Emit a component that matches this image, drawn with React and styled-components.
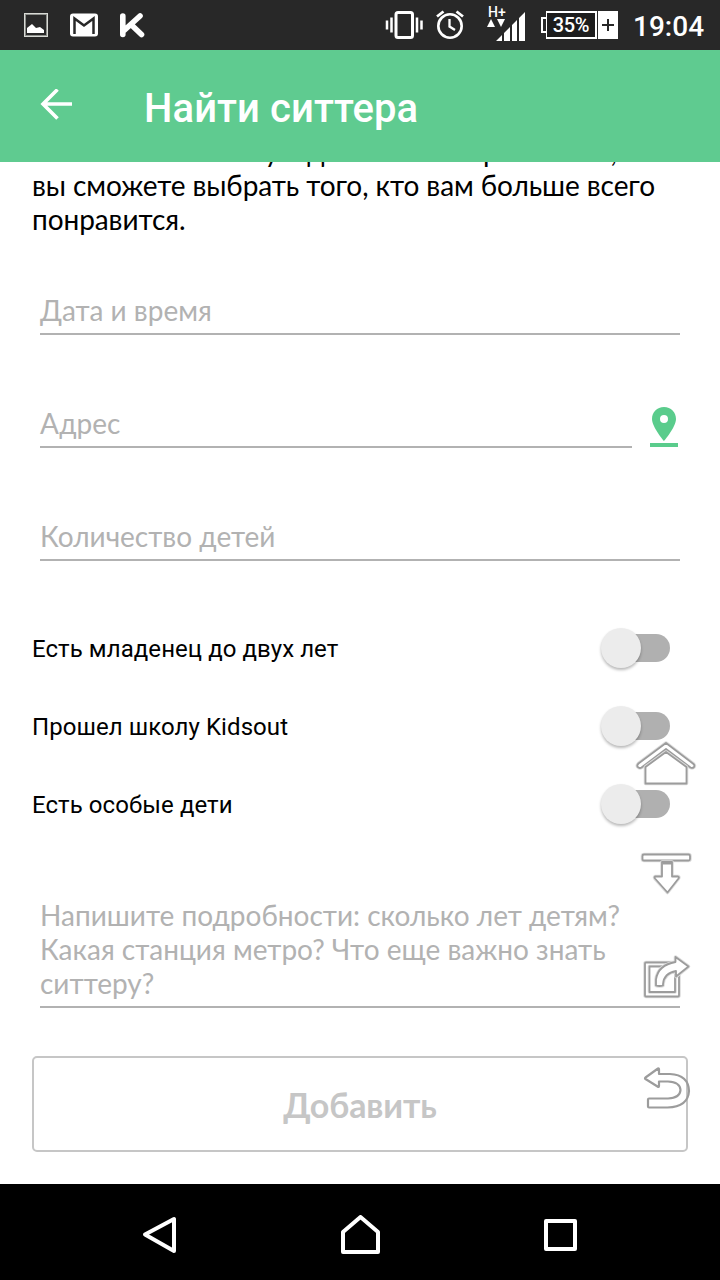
import React from 'react';
import styled, { createGlobalStyle } from 'styled-components';

const GlobalStyle = createGlobalStyle`
    body {
        margin: 0;
        background: #fff;
    }
    * {
        box-sizing: border-box;
    }
    svg {
        display: block;
    }
`;

const Screen = styled.div`
    position: relative;
    display: flex;
    flex-direction: column;
    width: 720px;
    height: 1280px;
    overflow: hidden;
    background: #fff;
    font-family: Lato, 'Open Sans', sans-serif;
`;

const StatusBar = styled.header`
    display: flex;
    flex: none;
    align-items: flex-start;
    justify-content: space-between;
    height: 50px;
    background: #282828;
    color: #fff;
    font-family: Roboto, sans-serif;
`;

const StatusGroup = styled.div`
    display: flex;
    height: 50px;
`;

const SignalBox = styled.div`
    display: flex;
    flex-direction: column;
    width: 40px;
    margin-left: 20px;
    padding-top: 6px;
`;

const Network = styled.span`
    height: 11px;
    padding-left: 1px;
    font: 500 14px/13px Roboto, sans-serif;
`;

const Battery = styled.div`
    display: flex;
    align-items: center;
    height: 28px;
    margin: 11px 0 0 14px;
`;

const BatteryTip = styled.span`
    width: 5px;
    height: 16px;
    border: 2px solid #fff;
    border-right: 0;
`;

const BatteryLevel = styled.span`
    width: 51px;
    height: 28px;
    border: 2px solid #fff;
    border-left-width: 1px;
    background: #1c1c1c;
    font: 500 20px/25px Roboto, sans-serif;
    letter-spacing: -0.3px;
    text-align: center;
`;

const BatteryCharge = styled.span`
    display: flex;
    align-items: center;
    justify-content: center;
    width: 20px;
    height: 28px;
    margin-left: 1px;
    background: #fff;
`;

const Clock = styled.time`
    width: 71px;
    margin: 0 16px 0 15px;
    font: 500 28px/53px Roboto, sans-serif;
    white-space: nowrap;
`;

const AppBar = styled.div`
    display: flex;
    flex: none;
    align-items: center;
    height: 112px;
    padding-left: 40px;
    background: #5fcb90;
`;

const Title = styled.h1`
    margin: 6px 0 0 71px;
    color: #fff;
    font: 500 40px/48px Roboto, sans-serif;
    letter-spacing: 0.1px;
`;

const Content = styled.main`
    flex: 1;
    overflow: hidden;
    padding: 0 32px;
`;

const Intro = styled.p`
    margin: -28px 0 0;
    color: #000;
    font-size: 28px;
    line-height: 34px;
    letter-spacing: -0.08px;
    white-space: nowrap;
`;

const FieldRow = styled.div`
    display: flex;
    align-items: flex-end;
    height: ${props => props.$height || 113}px;
    padding: 0 8px;
`;

const Field = styled.div`
    flex: 1;
    padding-bottom: 6px;
    border-bottom: 2px solid #b2b2b2;
    color: #b2b2b2;
    font-size: 28px;
    line-height: 34px;
`;

const PinButton = styled.div`
    margin: 0 2px 0 18px;
`;

const SwitchRow = styled.div`
    display: flex;
    align-items: center;
    justify-content: space-between;
    height: 78px;
    padding-right: 18px;
`;

const SwitchLabel = styled.span`
    padding-top: 2px;
    color: #000;
    font: 400 24px/30px Roboto, sans-serif;
    letter-spacing: 0.07px;
`;

const SwitchList = styled.div`
    padding-top: 48px;
`;

const Track = styled.div`
    display: flex;
    align-items: center;
    width: 56px;
    height: 28px;
    border-radius: 14px;
    background: #b0b0b0;
`;

const Thumb = styled.div`
    flex: none;
    width: 40px;
    height: 40px;
    margin-left: -13px;
    border-radius: 50%;
    background: #ececec;
    box-shadow: 0 2px 3px rgba(0, 0, 0, 0.28);
`;

const AddButton = styled.button`
    display: block;
    width: 656px;
    height: 96px;
    margin-top: 48px;
    padding: 2px 0 0;
    border: 2px solid #c6c6c6;
    border-radius: 5px;
    background: transparent;
    color: #c6c6c6;
    font: 700 34px/42px Lato, sans-serif;
    letter-spacing: -0.1px;
`;

const FloatingTools = styled.div`
    position: absolute;
    top: 739px;
    left: 634px;
`;

const NavBar = styled.nav`
    display: flex;
    flex: none;
    align-items: center;
    justify-content: space-between;
    height: 96px;
    padding: 6px 140px 0;
    background: #000;
`;

const switches = ['Есть младенец до двух лет', 'Прошел школу Kidsout', 'Есть особые дети'];

const toolShapes = [
    // home
    'M32 4L4.500 24.500q-2.500 2.500 0 4 1.500 1 3 0L32 10l24.500 18.500q2 1 3.500-.5 1-1.500-.5-3z',
    'M11.500 28V44.500h41V28L32 13z',
    // scroll to bottom
    'M10 115.500h44.500q1.500 0 1.500 1.500v3q0 1.500-1.500 1.500H10q-1.500 0-1.500-1.500v-3q0-1.500 1.500-1.500z',
    'M28 123h10v14.500h6q1.500.5.500 2L33.500 153.500 21 139.500q-1-1.500 0-2h7z',
    // share
    'M12 223.500h32q1 0 1 1v32q0 1-1 1H12q-1 0-1-1v-32q0-1 1-1z',
    'M15.500 227.500H41V253H15.500z',
    'M22 246.500v-6q2-14.500 19.500-17.500v-5l13 9.500-12.500 10v-5.500q-12 2-13 13v1.500q-3.500 1-7 0z',
];

function NotificationIcons() {
    return (
        <svg width="160" height="50" fill="none">
            <rect x="24.5" y="13.5" width="23" height="23" stroke="#d8dad5" />
            <rect x="25.5" y="14.5" width="21" height="21" stroke="#8d8f8b" />
            <path d="M27 33v-5l5-4 4 4 4-1 4 3v3z" fill="#fff" />
            <rect x="70" y="13.500" width="28" height="23" rx="3" fill="#fff" />
            <path d="M74.500 34V18.500L84 25.500l9.500-7V34" stroke="#282828" strokeWidth="2.500" />
            <path d="M122.800 16v18.500M140 16L123.500 31M131 24.500l10.500 10" stroke="#fff" strokeWidth="5.600" strokeLinecap="round" />
        </svg>
    );
}

function RingerIcons() {
    return (
        <svg width="82" height="50" fill="none" stroke="#fff">
            <rect x="11" y="12.500" width="16.500" height="25" rx="2" strokeWidth="3" />
            <path d="M6.500 17.500v15M32 17.500v15" strokeWidth="2.500" />
            <path d="M2 20.500v9M36.500 20.500v9" strokeWidth="2.500" />
            <circle cx="65" cy="26" r="11.700" strokeWidth="2.600" />
            <path d="M64.500 19v7.500l5.500 3.500" strokeWidth="2.300" />
            <path d="M52 16.500l6.500-5M71.500 11.500l6.500 5" strokeWidth="2.800" />
        </svg>
    );
}

function SignalIcon() {
    return (
        <svg width="40" height="24" fill="#fff" overflow="visible">
            <path d="M0 10l4-8 4 8zM10 2h8l-4 8z" />
            <path d="M9 24l6-6v6zM17 16l6-6v14h-6zM25 8l5-5v21h-5zM32 1l6-6v29h-6z" />
        </svg>
    );
}

function ToolIcons() {
    return (
        <svg width="66" height="374" fill="#fff" strokeLinejoin="round" overflow="visible">
            {toolShapes.map(d => (
                <g key={d}>
                    <path d={d} stroke="#dedede" strokeWidth="3.600" />
                    <path d={d} stroke="#9c9c9c" strokeWidth="1.800" />
                </g>
            ))}
            <path d="M28.500 124h9.500" stroke="#9c9c9c" strokeWidth="3" />
            <path
                d="M11.500 338.500L24 329.500q1-.5 1 1v4.500h11q18.500 1 19 17-1 16-21.500 16.500H15q-1 0-1-1v-7q0-1 1-1h19q12-.5 12.500-8.500-.5-8-12.500-8.500h-9v4.500q0 1.500-1.500.5L11.500 340q-1-.5 0-1.500z"
                fill="none"
                stroke="#9c9c9c"
                strokeWidth="2.200"
            />
        </svg>
    );
}

export default function App() {
    return (
        <Screen>
            <GlobalStyle />
            <StatusBar>
                <NotificationIcons />
                <StatusGroup>
                    <RingerIcons />
                    <SignalBox>
                        <Network>H+</Network>
                        <SignalIcon />
                    </SignalBox>
                    <Battery>
                        <BatteryTip />
                        <BatteryLevel>35%</BatteryLevel>
                        <BatteryCharge>
                            <svg width="12" height="12" stroke="#282828" strokeWidth="2">
                                <path d="M6 0v12M0 6h12" />
                            </svg>
                        </BatteryCharge>
                    </Battery>
                    <Clock>19:04</Clock>
                </StatusGroup>
            </StatusBar>
            <AppBar>
                <svg width="33" height="34" fill="none" stroke="#fff" strokeWidth="3.600">
                    <path d="M32 15H3M17.500 .5L3 15l14.500 14.500" />
                </svg>
                <Title>Найти ситтера</Title>
            </AppBar>
            <Content>
                <Intro>
                    Мы отошлем вам уведомление о принявших,<br />
                    вы сможете выбрать того, кто вам больше всего<br />
                    понравится.
                </Intro>
                <FieldRow $height={99}>
                    <Field>Дата и время</Field>
                </FieldRow>
                <FieldRow>
                    <Field>Адрес</Field>
                    <PinButton>
                        <svg width="28" height="41" fill="#5acc8c">
                            <path d="M14 0C7 0 2 5 2 12c0 8 12 22 12 22s12-14 12-22C26 5 21 0 14 0zm0 8a4 4 0 1 1 0 8 4 4 0 0 1 0-8z" />
                            <path d="M0 36h28v4H0z" />
                        </svg>
                    </PinButton>
                </FieldRow>
                <FieldRow>
                    <Field>Количество детей</Field>
                </FieldRow>
                <SwitchList>
                    {switches.map(label => (
                        <SwitchRow key={label}>
                            <SwitchLabel>{label}</SwitchLabel>
                            <Track>
                                <Thumb />
                            </Track>
                        </SwitchRow>
                    ))}
                </SwitchList>
                <FieldRow $height={165}>
                    <Field>
                        Напишите подробности: сколько лет детям?<br />
                        Какая станция метро? Что еще важно знать<br />
                        ситтеру?
                    </Field>
                </FieldRow>
                <AddButton>Добавить</AddButton>
            </Content>
            <FloatingTools>
                <ToolIcons />
            </FloatingTools>
            <NavBar>
                <svg width="40" height="40" fill="none" stroke="#fff" strokeWidth="4" strokeLinejoin="round">
                    <path d="M34 4v32L5 19.500z" />
                </svg>
                <svg width="40" height="40" fill="none" stroke="#fff" strokeWidth="4" strokeLinejoin="round">
                    <path d="M3 17L20.500 2 38 17v20H3z" />
                </svg>
                <svg width="40" height="40" fill="none" stroke="#fff" strokeWidth="4" strokeLinejoin="round">
                    <path d="M6 6h29v28H6z" />
                </svg>
            </NavBar>
        </Screen>
    );
}
